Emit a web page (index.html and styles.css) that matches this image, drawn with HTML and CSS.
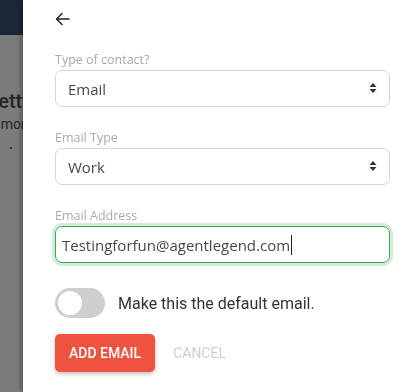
FILE: index.html
```html
<!DOCTYPE html>
<html lang="en">
<head>
  <meta charset="UTF-8" />
  <title>Add contact</title>
  <link rel="stylesheet" href="styles.css">
</head>
<body>
  <div class="page">
    <div class="topbar"></div>
    <div class="page-body">
      <div class="card-title"><span>Pretty</span></div>
      <div class="card-sub"><span>more</span></div>
      <div class="card-dots"><span class="dot"></span><span class="dot red"></span></div>
    </div>
  </div>

  <div class="drawer">
    <button class="back-btn" type="button">
      <svg width="15" height="14" viewBox="0 0 15 14" fill="none" stroke="#222" stroke-width="1.5" stroke-linecap="round" stroke-linejoin="round">
        <path d="M14 7H1.5M7 1.5L1.5 7L7 12.5"/>
      </svg>
    </button>

    <form class="contact-form">
      <div class="form-group">
        <label class="form-label">Type of contact?</label>
        <div class="select-wrap">
          <select class="form-select">
            <option>Email</option>
            <option>Phone</option>
          </select>
          <svg class="select-arrows" width="8" height="12" viewBox="0 0 8 12"><path d="M4 1L7.5 5H0.5Z M4 11L7.5 7H0.5Z" fill="#333"/></svg>
        </div>
      </div>

      <div class="form-group">
        <label class="form-label">Email Type</label>
        <div class="select-wrap">
          <select class="form-select">
            <option>Work</option>
            <option>Personal</option>
          </select>
          <svg class="select-arrows" width="8" height="12" viewBox="0 0 8 12"><path d="M4 1L7.5 5H0.5Z M4 11L7.5 7H0.5Z" fill="#333"/></svg>
        </div>
      </div>

      <div class="form-group">
        <label class="form-label">Email Address</label>
        <div class="input-wrap is-valid">
          <span class="input-value">Testingforfun@agentlegend.com</span><span class="caret"></span>
        </div>
      </div>

      <label class="switch-row">
        <input type="checkbox" class="switch-input">
        <span class="switch"></span>
        <span class="switch-text">Make this the default email.</span>
      </label>

      <div class="actions">
        <button type="button" class="btn-primary">Add Email</button>
        <button type="button" class="btn-link">Cancel</button>
      </div>
    </form>
  </div>
</body>
</html>
```

FILE: styles.css
```css
html, body {
  margin: 0;
  padding: 0;
  height: 100%;
  overflow: hidden;
  font-family: "Open Sans", sans-serif;
}

/* page behind the drawer (already dimmed) */
.page {
  height: 100%;
  background-color: #7c7c7c;
}

.topbar {
  height: 35px;
  background-color: #1b2739;
}

.page-body {
  padding-top: 54px;
  color: #262626;
  font-family: Roboto, sans-serif;
}

.card-title,
.card-sub,
.card-dots {
  display: flex;
  justify-content: flex-end;
  white-space: nowrap;
}

.card-title {
  font-size: 20px;
  font-weight: 500;
  line-height: 24px;
  width: 32px;
}

.card-sub {
  font-size: 14px;
  line-height: 22px;
  width: 33px;
}

.card-dots {
  margin-top: 12px;
  gap: 12px;
  width: 26px;
}

.dot {
  width: 2px;
  height: 2px;
  border-radius: 50%;
  background: #222;
}

.dot.red {
  background: #b02020;
}

/* side drawer */
.drawer {
  position: fixed;
  top: 0;
  right: 0;
  bottom: 0;
  left: 23px;
  background: #fff;
  box-shadow: -2px 0 5px rgba(0, 0, 0, 0.35);
  padding: 12px 18px 0 32px;
}

.back-btn {
  display: block;
  border: none;
  background: none;
  padding: 0;
  height: 14px;
  cursor: pointer;
}

.back-btn svg {
  display: block;
}

.contact-form {
  margin-top: 26px;
}

.form-group {
  margin-bottom: 23px;
}

.form-label {
  display: block;
  font-size: 12.5px;
  line-height: 16px;
  color: #aaaaaa;
  margin-bottom: 2px;
}

.select-wrap {
  position: relative;
}

.form-select {
  -webkit-appearance: none;
  appearance: none;
  width: 100%;
  height: 37px;
  box-sizing: border-box;
  border: 1px solid #d3d6da;
  border-radius: 7px;
  background: #fff;
  padding: 0 12px;
  font-family: "Open Sans", sans-serif;
  font-size: 15px;
  color: #45494e;
  outline: none;
}

.select-arrows {
  position: absolute;
  right: 13px;
  top: 12px;
  pointer-events: none;
}

.input-wrap {
  display: flex;
  align-items: center;
  height: 37px;
  box-sizing: border-box;
  border: 1px solid #d3d6da;
  border-radius: 7px;
  padding: 0 6px;
  font-size: 15px;
  color: #45494e;
}

.input-wrap.is-valid {
  border-color: #34a853;
  box-shadow: 0 0 0 3px rgba(52, 168, 83, 0.22);
}

.caret {
  width: 1px;
  height: 20px;
  margin-left: 1px;
  background: #222;
}

/* toggle */
.switch-row {
  display: flex;
  align-items: center;
  gap: 13px;
  margin-top: 25px;
  cursor: pointer;
}

.switch-input {
  display: none;
}

.switch {
  position: relative;
  width: 50px;
  height: 30px;
  border-radius: 15px;
  background: #cfcfcf;
  flex-shrink: 0;
}

.switch::before {
  content: "";
  position: absolute;
  top: 3px;
  left: 3px;
  width: 24px;
  height: 24px;
  border-radius: 50%;
  background: #fff;
}

.switch-text {
  font-family: Roboto, sans-serif;
  font-size: 16px;
  color: #333;
}

/* buttons */
.actions {
  display: flex;
  align-items: center;
  gap: 18px;
  margin-top: 16px;
}

.btn-primary {
  height: 38px;
  padding: 0 14px;
  border: none;
  border-radius: 5px;
  background: #f05240;
  color: #fff;
  font-family: Roboto, sans-serif;
  font-size: 14px;
  font-weight: 500;
  text-transform: uppercase;
  box-shadow: 0 2px 4px rgba(0, 0, 0, 0.25);
  cursor: pointer;
}

.btn-link {
  border: none;
  background: none;
  padding: 0;
  color: #cfcfcf;
  font-family: Roboto, sans-serif;
  font-size: 14px;
  text-transform: uppercase;
  cursor: pointer;
}
```
